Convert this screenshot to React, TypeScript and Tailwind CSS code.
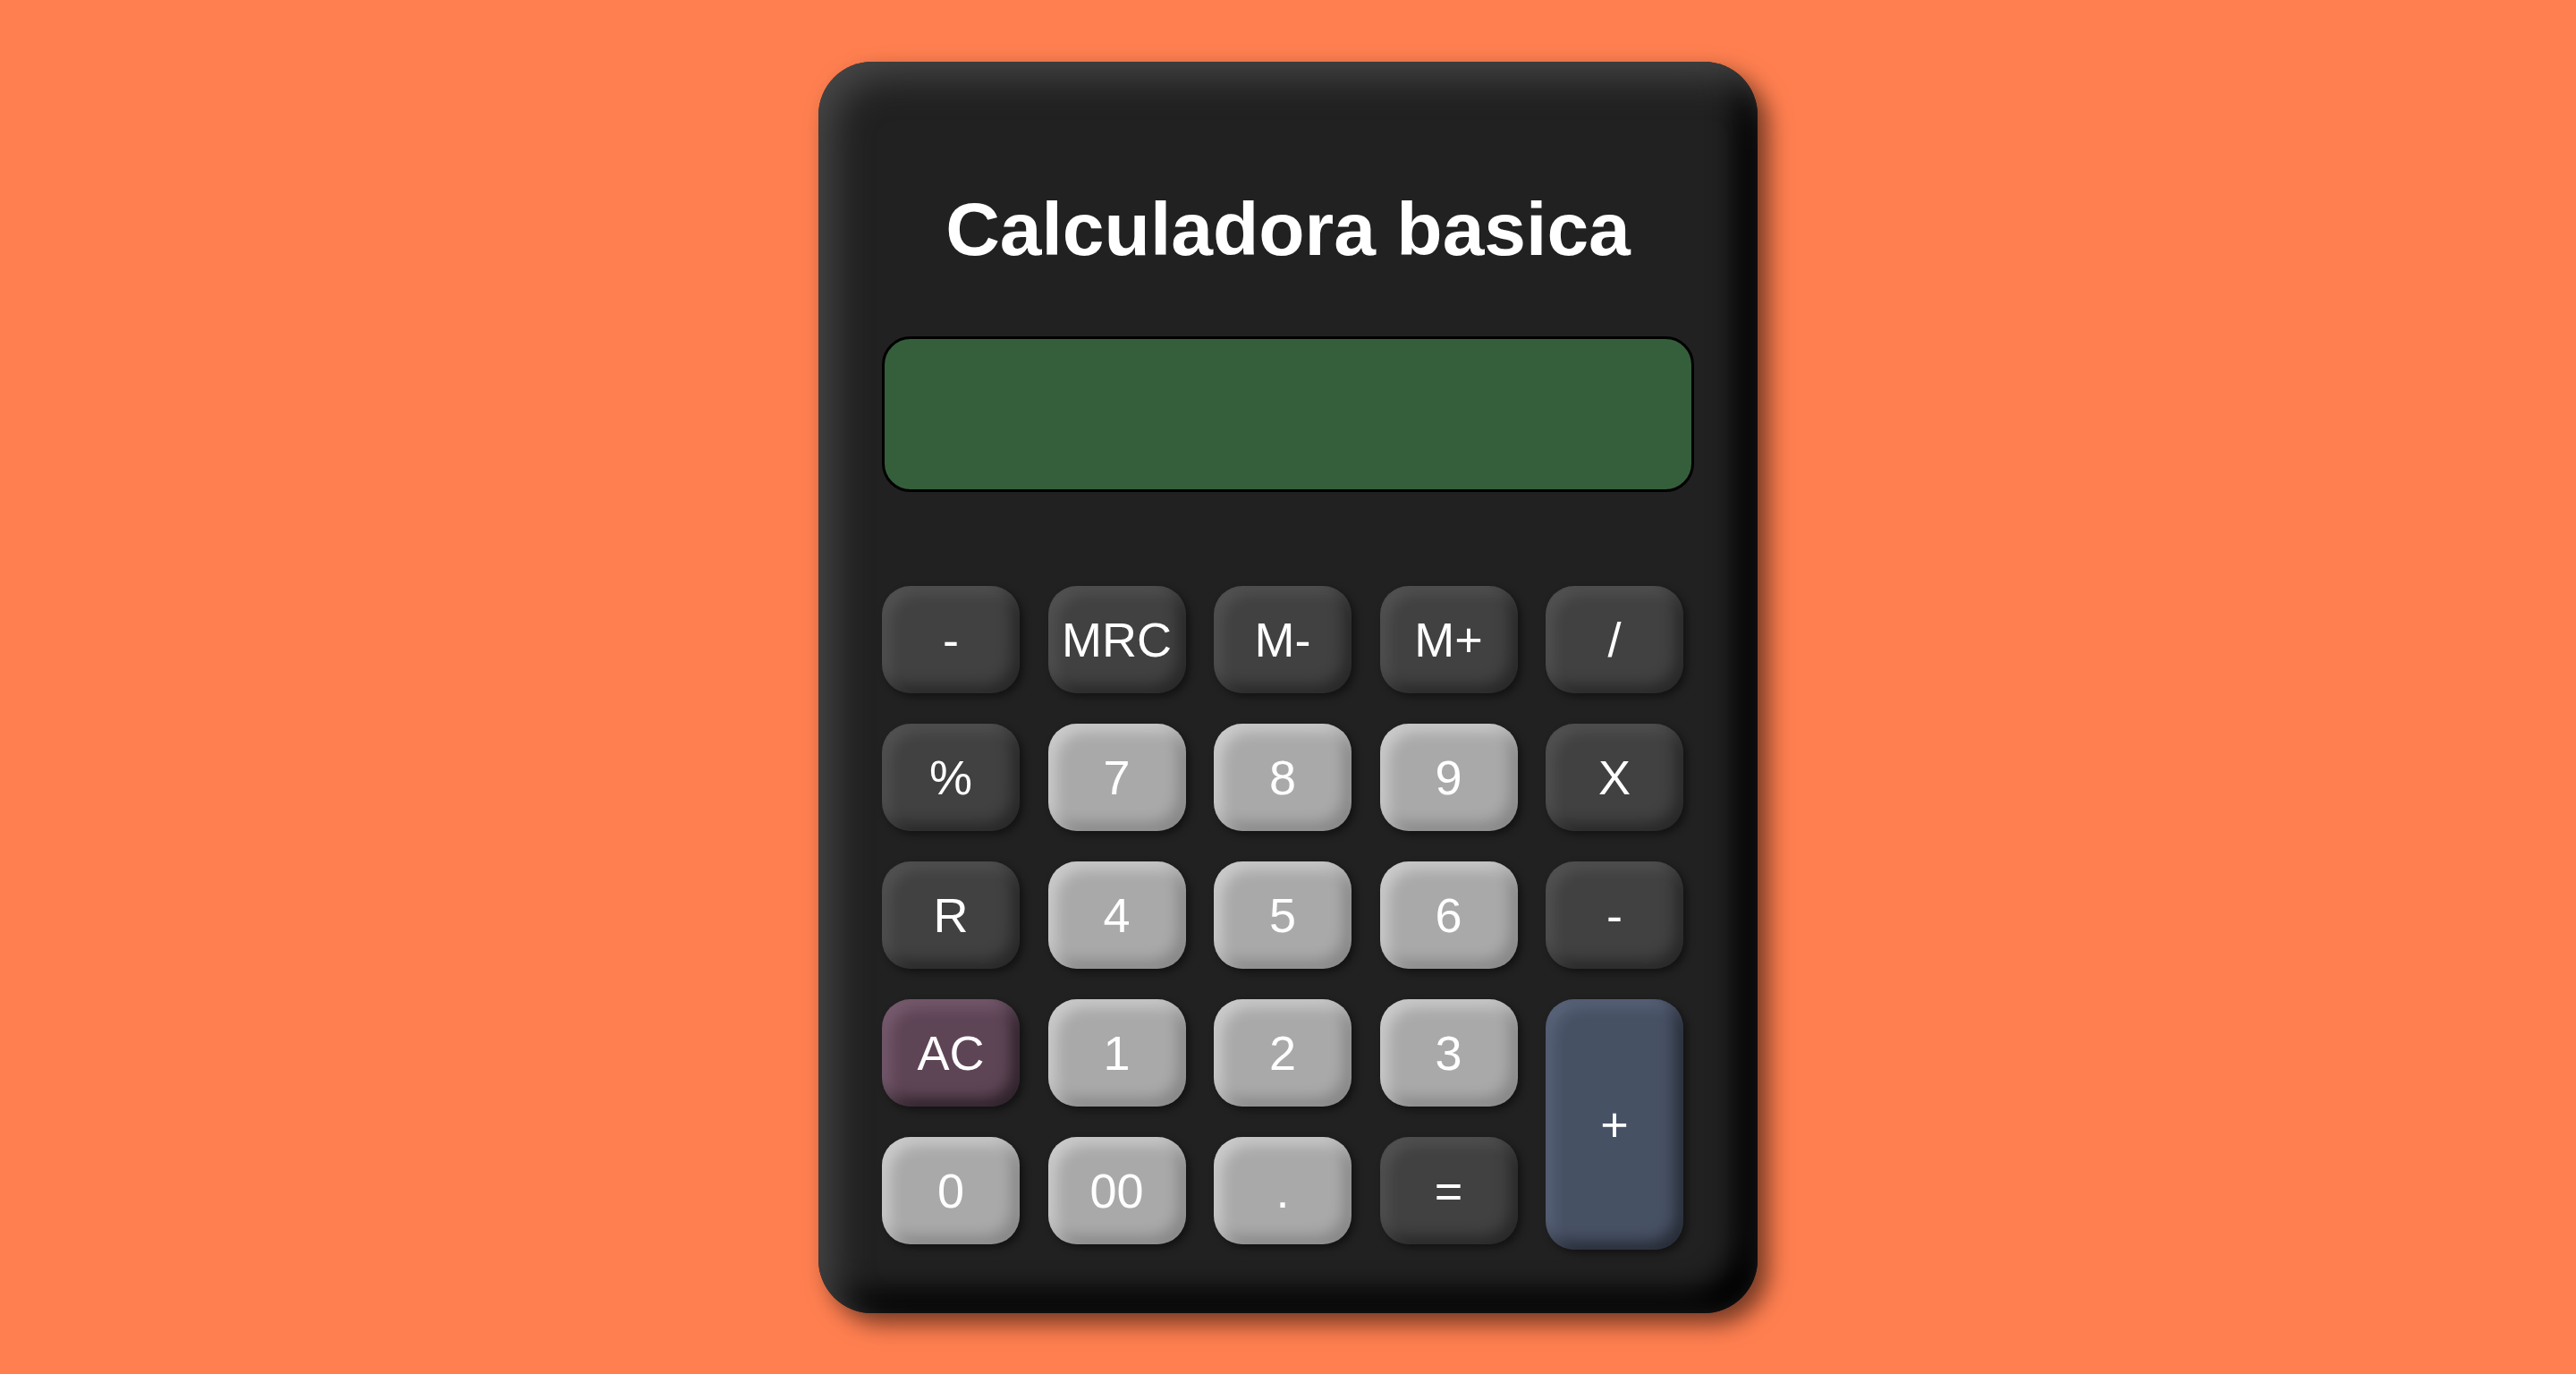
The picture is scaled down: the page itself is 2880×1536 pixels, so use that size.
import React from 'react';

type Kind = 'dark' | 'light' | 'ac' | 'plus';

interface Key {
  label: string;
  kind: Kind;
}

// filas del teclado, el "+" va aparte porque ocupa dos filas
const KEYS: Key[] = [
  { label: '-', kind: 'dark' },
  { label: 'MRC', kind: 'dark' },
  { label: 'M-', kind: 'dark' },
  { label: 'M+', kind: 'dark' },
  { label: '/', kind: 'dark' },
  { label: '%', kind: 'dark' },
  { label: '7', kind: 'light' },
  { label: '8', kind: 'light' },
  { label: '9', kind: 'light' },
  { label: 'X', kind: 'dark' },
  { label: 'R', kind: 'dark' },
  { label: '4', kind: 'light' },
  { label: '5', kind: 'light' },
  { label: '6', kind: 'light' },
  { label: '-', kind: 'dark' },
  { label: 'AC', kind: 'ac' },
  { label: '1', kind: 'light' },
  { label: '2', kind: 'light' },
  { label: '3', kind: 'light' },
  { label: '+', kind: 'plus' },
  { label: '0', kind: 'light' },
  { label: '00', kind: 'light' },
  { label: '.', kind: 'light' },
  { label: '=', kind: 'dark' },
];

const kindClass: Record<Kind, string> = {
  dark: 'bg-[#414141] shadow-[inset_9px_9px_16px_rgba(255,255,255,0.09),inset_-9px_-9px_16px_rgba(0,0,0,0.38),4px_4px_8px_rgba(0,0,0,0.45)]',
  light: 'bg-[#a9a9a9] shadow-[inset_9px_9px_16px_rgba(255,255,255,0.4),inset_-9px_-9px_16px_rgba(0,0,0,0.2),4px_4px_8px_rgba(0,0,0,0.45)]',
  ac: 'bg-[#5e4556] shadow-[inset_9px_9px_16px_rgba(255,210,240,0.16),inset_-9px_-9px_16px_rgba(0,0,0,0.5),4px_4px_8px_rgba(0,0,0,0.45)]',
  plus: 'bg-[#475164] shadow-[inset_9px_9px_16px_rgba(200,215,255,0.14),inset_-9px_-9px_16px_rgba(0,0,0,0.45),4px_4px_8px_rgba(0,0,0,0.45)]',
};

const CalcKey: React.FC<{ k: Key }> = ({ k }) => (
  <button
    className={`flex items-center justify-center rounded-[32px] text-white text-[54px] leading-none font-['Liberation_Sans',Arial,sans-serif] ${
      k.kind === 'plus' ? 'row-span-2 h-[280px] self-start' : 'h-[120px]'
    } ${kindClass[k.kind]}`}
  >
    {k.label}
  </button>
);

const App: React.FC = () => {
  return (
    <div className="min-h-screen w-full bg-[#ff7f50] flex items-center justify-center font-['Liberation_Sans',Arial,sans-serif]">
      <div className="w-[1050px] h-[1399px] rounded-[60px] bg-[#212121] px-[71px] pt-[145px] flex flex-col shadow-[inset_16px_16px_40px_#474747,inset_-24px_-24px_30px_#000,12px_12px_26px_rgba(0,0,0,0.55)]">
        {/* título */}
        <h1 className="text-white text-[84px] leading-none font-bold text-center">Calculadora basica</h1>

        {/* pantalla */}
        <div className="mt-[78px] h-[174px] rounded-[32px] bg-[#355e3b] border-[3px] border-black"></div>

        {/* teclado */}
        <div className="mt-[105px] grid grid-cols-[repeat(5,154px)] auto-rows-[120px] gap-x-[31.5px] gap-y-[34px]">
          {KEYS.map((k, i) => (
            <CalcKey key={i} k={k} />
          ))}
        </div>
      </div>
    </div>
  );
};

export default App;
